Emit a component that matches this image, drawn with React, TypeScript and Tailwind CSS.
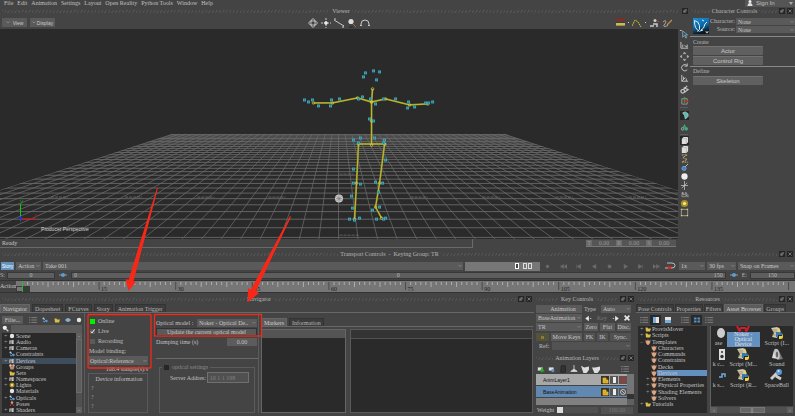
import React from "react";
import { clsx } from "clsx";

const HATCH =
  "bg-[repeating-linear-gradient(120deg,#5a5a5a_0_1px,transparent_1px_3px)]";

function Hatch({ className }: { className?: string }) {
  return <div className={clsx("h-[3px] opacity-70", HATCH, className ?? "flex-1")} />;
}

function DockIcon() {
  return (
    <svg viewBox="0 0 6 6" className="size-[6px]">
      <rect width="6" height="6" fill="#262626" />
      <path d="M2.5 1.5h2v2M1.5 2.5h2v2h-2z" fill="#777" stroke="#777" strokeWidth="0.4" />
    </svg>
  );
}

function CloseIcon() {
  return (
    <svg viewBox="0 0 6 6" className="size-[6px]">
      <rect width="6" height="6" fill="#262626" />
      <path d="M1.5 1.5l3 3M4.5 1.5l-3 3" stroke="#8a8a8a" strokeWidth="0.8" />
    </svg>
  );
}

function TitleBar({ title, close = true, className }: { title: string; close?: boolean; className?: string }) {
  return (
    <div className={clsx("flex h-[10px] shrink-0 items-center gap-[2px] px-[2px]", className)}>
      <Hatch />
      <h2 className="whitespace-pre text-[#b8b8b8]">{title}</h2>
      <Hatch />
      <button aria-label="Undock"><DockIcon /></button>
      {close && <button aria-label="Close"><CloseIcon /></button>}
    </div>
  );
}

function Select({
  label,
  value,
  className,
  dim,
}: {
  label: string;
  value: string;
  className?: string;
  dim?: boolean;
}) {
  return (
    <div className={clsx("relative bg-[#5a5a5a]", className)}>
      <select
        aria-label={label}
        className={clsx(
          "block h-full w-full appearance-none truncate pl-[2px] pr-[5px] outline-none",
          dim ? "text-[#808080]" : "text-[#c8c8c8]",
        )}
      >
        <option>{value}</option>
      </select>
      <svg viewBox="0 0 4 3" className="pointer-events-none absolute right-px top-1/2 h-[3px] w-[4px] -translate-y-1/2">
        <path d="M0.5 0.5l1.5 1.5l1.5-1.5" fill="none" stroke="#8a8a8a" strokeWidth="0.8" />
      </svg>
    </div>
  );
}

function Button({ children, className }: { children: React.ReactNode; className?: string }) {
  return (
    <button className={clsx("flex items-center justify-center whitespace-nowrap bg-[#5a5a5a] text-[#c8c8c8]", className)}>
      {children}
    </button>
  );
}

function Tabs({ items, active, dense }: { items: string[]; active: string; dense?: boolean }) {
  return (
    <div className={clsx("flex h-[9px] items-end overflow-hidden border-b border-[#686868]", dense ? "gap-px" : "gap-[2px]")}>
      {items.map((t) => (
        <button
          key={t}
          className={clsx(
            "h-[8px] shrink-0 whitespace-nowrap border-x border-t",
            dense ? "px-px" : "px-[2px]",
            t === active ? "border-[#666] bg-[#5c5c5c] text-[#d0d0d0]" : "border-[#333] bg-[#3c3c3c] text-[#b8b8b8]",
          )}
        >
          {t}
        </button>
      ))}
    </div>
  );
}

/* ---------- Viewer ---------- */

const VX = 338;
const VY = 51.5;
const rows = Array.from({ length: 30 }, (_, k) => VY + 1 / (0.00638 + 0.000418 * k));
const cols = Array.from({ length: 51 }, (_, k) => (k - 25) * 0.1234);

const bones: number[][] = [
  [313, 74, 332, 74, 357, 69, 371, 73, 385, 70, 409, 76, 427, 75],
  [372, 60, 371, 73, 371, 92, 371, 116],
  [358, 115, 384, 115],
  [358, 115, 356, 154, 354, 190],
  [384, 115, 379, 154, 375, 178, 381, 189],
];
const markers: number[][] = [
  [365, 44], [373, 42], [379, 43], [363, 48], [376, 51],
  [304, 71], [308, 73], [312, 71], [318, 77], [331, 71], [330, 77], [339, 70], [362, 68],
  [358, 70], [370, 70], [375, 75], [383, 70], [395, 70], [408, 73], [407, 79], [414, 78], [425, 74], [432, 73], [428, 74],
  [369, 90], [373, 92], [360, 109], [374, 109], [353, 111], [384, 111],
  [358, 114], [383, 114], [385, 131], [353, 140], [353, 154], [360, 155], [375, 153], [382, 154],
  [378, 163], [351, 167], [352, 179], [379, 178], [372, 181], [349, 190], [354, 191], [359, 189], [376, 190], [383, 190], [385, 189],
];

function Viewport() {
  return (
    <svg viewBox="0 0 677 210" preserveAspectRatio="xMidYMid slice" className="block h-[210px] min-w-0 flex-1 bg-[#2a2a2a]">
      <defs>
        <clipPath id="floor">
          <path d="M173 104.500H503L829 211H-153Z" />
        </clipPath>
      </defs>
      <g clipPath="url(#floor)" stroke="#6a6a6a">
        {rows.map((y) => (
          <line key={y} x1="-160" x2="840" y1={y} y2={y} strokeWidth="0.900" />
        ))}
        {cols.map((s) => (
          <line key={s} x1={VX + s * 53.5} y1="105" x2={VX + s * 160} y2="211.5" strokeOpacity="0.85" strokeWidth="0.900" />
        ))}
      </g>
      <g stroke="#777" strokeWidth="0.700" strokeDasharray="3 1">
        {[51, 125, 197, 268, 410, 482, 555, 628].map((x) => (
          <line key={x} x1={x} x2={x + 17} y1="168" y2="168" />
        ))}
        <line x1="339" x2="353" y1="145" y2="145" />
        <line x1="339" x2="359" y1="206" y2="206" />
      </g>
      <path d="M20.500 192V175" stroke="#18c818" />
      <path d="M21 189.500h14" stroke="#c81414" strokeWidth="1.300" />
      <path d="M19 189l1.500-2l1.500 2l-1.500 3z" fill="#2a2aff" />
      <path d="M20 171l1.500 2m1.500-2l-2 4" stroke="#18a018" strokeWidth="0.700" />
      <path d="M35 185l2 3m0-3l-2 3" stroke="#a01818" strokeWidth="0.700" />
      <text x="41" y="202" fill="#d4d4d4" fontSize="5" className="font-['Liberation_Sans',sans-serif]">Producer Perspective</text>
      <g fill="none" stroke="#8f8c22" strokeWidth="1.800">
        {bones.map((b, i) => (
          <polyline key={i} points={b.join(" ")} />
        ))}
      </g>
      <g fill="none" stroke="#d2cc3a" strokeWidth="0.700">
        {bones.map((b, i) => (
          <polyline key={i} points={b.join(" ")} />
        ))}
        {bones.flatMap((b) =>
          b.flatMap((_, i) => (i % 2 ? [] : [<circle key={`${b[i]}-${b[i + 1]}-${i}`} cx={b[i]} cy={b[i + 1]} r="1.300" />])),
        )}
      </g>
      <g fill="#1d6f80" stroke="#41a9bd" strokeWidth="0.900">
        {markers.map(([x, y]) => (
          <rect key={`${x}-${y}`} x={x - 1} y={y - 1} width="2" height="2" />
        ))}
      </g>
      <circle cx="338.500" cy="169.500" r="4" fill="#c8c8c8" />
      <path d="M335.500 169.500h6M338.500 166.500v6M336 167l5 5m0-5l-5 5" stroke="#777" strokeWidth="0.600" />
    </svg>
  );
}

function Glyph({ children, className }: { children: React.ReactNode; className?: string }) {
  return (
    <svg viewBox="0 0 10 10" fill="none" stroke="#c8c8c8" strokeWidth="1" className={clsx("shrink-0", className ?? "size-[10px]")}>
      {children}
    </svg>
  );
}

function ViewerToolbar() {
  const drop = <svg viewBox="0 0 4 3" className="h-[3px] w-[4px]"><path d="M0.500 0.500l1.500 1.500l1.500-1.500" fill="none" stroke="#999" strokeWidth="0.700" /></svg>;
  const small = "h-[9px] w-[25px] font-['Liberation_Sans',sans-serif] text-[5px]";
  return (
    <div className="grid h-[13px] grid-cols-[1fr_auto_1fr] items-center pl-[2px] pr-[14px]">
      <div className="flex gap-[3px]">
        <Button className={clsx(small, "gap-[3px]")}>{drop}View</Button>
        <Button className={clsx(small, "gap-px")}>{drop}Display</Button>
      </div>
      <div className="flex items-center gap-[3px]">
        <button aria-label="Orbit"><Glyph><ellipse cx="5" cy="5" rx="2" ry="4.500" strokeWidth="0.700" /><ellipse cx="5" cy="5" rx="4.500" ry="2" strokeWidth="0.700" /><circle cx="5" cy="5" r="3.200" strokeWidth="0.500" /></Glyph></button>
        <button aria-label="Pan"><Glyph><path d="M5 0v10M0 5h10" strokeDasharray="2 1" /><circle cx="5" cy="5" r="1.500" fill="#fff" /></Glyph></button>
        <button aria-label="Dolly"><Glyph><path d="M0 2L10 8" /><path d="M0 1l2 0M8 9h2v-2" /></Glyph></button>
        <button aria-label="Zoom"><Glyph><path d="M6 6l3 3" stroke="#b06030" /><path d="M2 9h4" stroke="#222" /><circle cx="4" cy="3.500" r="2.600" fill="#ddd" stroke="none" /></Glyph></button>
        <button aria-label="Roll"><Glyph><path d="M1 8V6a4 4 0 0 1 8 0v2M0 7.500h2M8 7.500h2" /></Glyph></button>
      </div>
      <div className="flex items-center justify-end gap-[3px] pr-[4px]">
        <button aria-label="Ruler"><Glyph className="h-[9px] w-[9px]"><path d="M0 2h10" stroke="#a02020" strokeWidth="2" /><path d="M0 7h10" stroke="#c8bc50" strokeWidth="3" /><path d="M0 5h10" stroke="#333" strokeDasharray="1 1" /></Glyph></button>
        <span className="size-px bg-[#ccc]" />
        <button aria-label="Trajectory"><Glyph><path d="M0 8l3-6l3 2l3 5" stroke="#c8c020" strokeDasharray="2 0.500" /></Glyph></button>
        <span className="size-px bg-[#ccc]" />
        <button aria-label="Model display"><Glyph><circle cx="6" cy="2.500" r="1.500" fill="#ccc" stroke="none" /><path d="M1 8h4M4 6h4v3" strokeWidth="1.500" /><path d="M8 3l2 1" stroke="#c04020" /></Glyph></button>
        <button aria-label="Paint"><Glyph><path d="M1 4c3-3 4 0 1 3c-1 2 2 2 4 0" strokeWidth="0.800" /><path d="M5 7l5-5" stroke="#c89040" strokeWidth="1.200" /></Glyph></button>
      </div>
    </div>
  );
}

const cube = (
  <>
    <path d="M2 3l2-2h5v6l-2 2h-5z" fill="#ddd" stroke="none" />
    <path d="M2 3h5v6M7 3l2-2" stroke="#999" strokeWidth="0.500" />
  </>
);

const stripTop: [string, React.ReactNode][] = [
  ["Select", <><path d="M3 1v7l2-2l1.500 3l1-0.500l-1.500-3h2.500z" fill="#2c5568" stroke="#9cc4d8" strokeWidth="0.700" /><path d="M0 0.500h2" /></>],
  ["Translate axes", <path d="M1 1v7h8M3 4v3M5 5l3 2M8 4v3" />],
  ["Translate", <path d="M5 0l1.500 2h-3zM5 10l1.500-2h-3zM0 5l2-1.500v3zM10 5l-2-1.500v3z" fill="#bbb" stroke="#bbb" strokeWidth="0.500" />],
  ["Rotate", <path d="M8 3a3.500 3.500 0 1 0 0 4.500M8 0.500v3h-3" />],
  ["Scale", <path d="M2 1v7h7M2 8l4-4M4 3v3M7 5v3" />],
  ["Link", <path d="M1 7a2 2 0 1 0 4 0a2 2 0 1 0-4 0M4 5l4-4M4 3l5 2l-4 3" strokeWidth="1.300" />],
  ["Pivot", <><path d="M2 3h6v6h-6z" stroke="#999" /><path d="M5 8V1" stroke="#3aa03a" strokeWidth="1.500" /><path d="M5 6h5" stroke="#d02020" strokeWidth="1.500" /></>],
];
const stripMid: [string, React.ReactNode][] = [
  ["Shaded", <><rect width="10" height="10" fill="#252525" stroke="none" /><path d="M3 2l3-1l3 2v3l-3 3l-1-4z" fill="#5ba" stroke="#cde" strokeWidth="0.700" /></>],
  ["Colored", <><path d="M5 1l2 4h-4z" fill="#38b060" stroke="none" /><circle cx="3" cy="6.500" r="1.500" stroke="#ccc" fill="#357" strokeWidth="0.700" /><circle cx="7" cy="6.500" r="2" fill="#40a880" stroke="none" /></>],
];
const stripBottom: [string, React.ReactNode][] = [
  ["Cube dark", <><rect width="10" height="10" fill="#252525" stroke="none" />{cube}</>],
  ["Cube", cube],
  ["Path", <path d="M2 1h6l-5 3l5 2l-6 3h7" stroke="#c8c070" strokeDasharray="2 1" />],
  ["Joint", <><path d="M5 5l4-4" /><circle cx="4.500" cy="6" r="2.300" fill="#3a80c8" stroke="#9cc8f0" strokeWidth="0.600" /></>],
  ["Sphere", <circle cx="5" cy="5" r="3.500" fill="#eee" stroke="none" />],
  ["Null", <path d="M5 0v10M1 5h8M2 8l6-6" strokeWidth="0.800" />],
  ["Camera", <><path d="M2 5h5v2.500h-5zM7 6l2-1v3z" fill="#555" strokeWidth="0.500" /><circle cx="3" cy="3.500" r="1.300" fill="#999" stroke="none" /><circle cx="6.500" cy="3.500" r="1.300" fill="#888" stroke="none" /></>],
  ["Light", <><circle cx="5" cy="5" r="4" fill="#a89020" stroke="none" /><circle cx="5" cy="5" r="1.800" fill="#f0e8a0" stroke="none" /></>],
  ["Bounds", <><path d="M1.500 1.500h7v7h-7z" strokeWidth="0.700" /><path d="M1 1.500h1.500M7.500 1.500h1.500M1 8.500h1.500M7.500 8.500h1.500" stroke="#e0d840" strokeWidth="1.500" /></>],
];

function ToolStrip() {
  const item = (h: string) => ([name, g]: [string, React.ReactNode]) => (
    <button key={name} aria-label={name} className={clsx("flex items-center justify-center", h)}>
      <Glyph className="size-[9px]">{g}</Glyph>
    </button>
  );
  return (
    <div className="flex w-[12px] shrink-0 flex-col">
      {stripTop.map(item("h-[11px]"))}
      <div className="mx-[2px] my-px h-px bg-[#5a5a5a]" />
      {stripMid.map(item("h-[12px]"))}
      <div className="mx-[2px] my-px h-px bg-[#5a5a5a]" />
      {stripBottom.map(item("h-[9px]"))}
    </div>
  );
}

function StatusRow() {
  return (
    <div className="flex h-[9px] items-center justify-between pr-[14px]">
      <div className="h-[9px] w-7/10 border-b border-r border-[#6a6a6a] pl-[2px] leading-[9px] text-[#c4c4c4]">Ready</div>
      <div className="flex text-[#999]">
        {["T", "R", "S"].map((a) => (
          <label key={a} className="flex h-[7px] border-b border-[#777] bg-[#6a6a6a] leading-[6px]">
            <span className="w-[6px] text-center">{a}</span>
            <input defaultValue="0.00" className="h-[6px] w-[24px] bg-[#555] text-center outline-none" />
          </label>
        ))}
      </div>
    </div>
  );
}

function CharacterControls() {
  const btn = "h-[9px] w-[70px] rounded-[1px] border-t border-[#727272] bg-[#606060] font-['Liberation_Sans',sans-serif]";
  return (
    <aside className="flex w-[105px] shrink-0 flex-col">
      <TitleBar title="Character Controls" />
      <div className="flex h-[21px] gap-px border-b border-[#888] pl-[3px] pt-[2px]">
        <svg viewBox="0 0 16 16" className="size-[16px] shrink-0">
          <defs>
            <linearGradient id="logo" x1="0" y1="0" x2="0.300" y2="1"><stop offset="0" stopColor="#1a90d8" /><stop offset="0.600" stopColor="#0d66a0" /><stop offset="1" stopColor="#0a1520" /></linearGradient>
          </defs>
          <rect width="16" height="16" fill="url(#logo)" />
          <path d="M1.500 2.500q4 0.500 5 5t-2 6M1.500 2.500q-0.500 8 5 11M8 12q3-1 4-6l2-2M9 2l2 1M7 13l3-1" fill="none" stroke="#d8eef8" strokeWidth="1" />
          <path d="M12 13.500h4l-2 2z" fill="#ccc" />
        </svg>
        <div className="flex min-w-0 flex-1 flex-col gap-px">
          {["Character:", "Source:"].map((l) => (
            <div key={l} className="flex h-[7px] gap-px">
              <span className="w-[25px] text-right leading-[7px] text-[#b8b8b8]">{l}</span>
              <Select label={l} value="None" className="flex-1" />
            </div>
          ))}
        </div>
      </div>
      <div className="flex flex-col gap-px border-b border-[#888] pb-px pl-[3px] pt-[2px]">
        <h3 className="leading-[6px] text-[#b8b8b8]">Create</h3>
        <Button className={btn}>Actor</Button>
        <Button className={btn}>Control Rig</Button>
      </div>
      <div className="flex flex-col gap-px pl-[3px] pt-px">
        <h3 className="leading-[7px] text-[#b8b8b8]">Define</h3>
        <Button className={btn}>Skeleton</Button>
      </div>
    </aside>
  );
}

/* ---------- Transport ---------- */

const transport: [string, string][] = [
  ["Record", "M3 5a2 2 0 1 0 4 0a2 2 0 1 0-4 0"],
  ["To start", "M0 2v6M5 2l-4 3l4 3zM10 2l-4 3l4 3z"],
  ["Previous", "M2 2v6M8 2l-5 3l5 3z"],
  ["Play back", "M7 2l-5 3l5 3z"],
  ["Stop", "M3 3h4v4h-4z"],
  ["Play", "M3 2l5 3l-5 3z"],
  ["Next", "M8 2v6M2 2l5 3l-5 3z"],
  ["To end", "M10 2v6M0 2l4 3l-4 3zM5 2l4 3l-4 3z"],
];

function Transport() {
  const range = "border border-[#383838] bg-[#5e5e5e] text-[#b8b8b8] outline-none";
  return (
    <section>
      <TitleBar title="Transport Controls  -  Keying Group: TR" className="mt-px" />
      <div className="mt-[2px] flex h-[10px] items-center gap-[2px] pl-px">
        <Button className="h-[8px] w-[13px] bg-[#6492bf] font-['Liberation_Sans',sans-serif] text-[5px] text-white">Story</Button>
        <Select label="Action" value="Action" className="h-[8px] w-[25px]" />
        <Select label="Take" value="Take 001" className="h-[8px] flex-1" />
        <div className="flex h-[9px] w-[75px] items-center justify-end gap-[4px] bg-[#777]">
          <span className="h-[6px] w-[4px] border border-white bg-[#444]" />
          <span className="mr-[8px] flex h-[6px] w-[9px] gap-px"><span className="flex-1 border border-[#ddd]" /><span className="flex-1 border border-[#ddd]" /></span>
        </div>
        <div className="flex w-[120px] justify-between px-[2px]">
          {transport.map(([n, d]) => (
            <button key={n} aria-label={n}>
              <svg viewBox="0 0 10 10" className="size-[7px]"><path d={d} fill="#6e6e6e" stroke="#6e6e6e" strokeWidth="0.700" /></svg>
            </button>
          ))}
        </div>
        <button aria-label="Loop" className="w-[13px]">
          <svg viewBox="0 0 12 8" className="h-[8px] w-[12px]"><path d="M3 1h5q3 0 3 2.500t-3 2.500h-7" fill="none" stroke="#ccc" strokeWidth="0.900" /><path d="M4 4l3 3M7 4l-3 3" stroke="#d02020" strokeWidth="1.300" /></svg>
        </button>
        <Select label="Speed" value="1x" className="h-[8px] w-[26px]" />
        <Select label="Frame rate" value="30 fps" className="h-[8px] w-[29px]" />
        <Select label="Snap mode" value="Snap on Frames" className="h-[8px] w-[57px]" />
      </div>
      <div className="flex h-[8px] items-center gap-px text-[#b8b8b8]">
        <label className="flex items-center gap-[2px]">S:<input defaultValue="0" className={clsx(range, "h-[7px] w-[48px] text-center")} /></label>
        <span className="flex w-[14px] justify-center"><Key /></span>
        <div className={clsx(range, "flex h-[7px] flex-1 items-center justify-between px-[2px] leading-[5px]")}>
          <span className="w-[9px]">0</span><span>0</span><span>150</span>
        </div>
        <span className="flex w-[14px] justify-center"><Key /></span>
        <label className="flex items-center gap-[3px]">E:<input defaultValue="150" className={clsx(range, "h-[7px] w-[45px] text-center")} /></label>
      </div>
      <div className="mt-px flex h-[13px] border-y border-[#333]">
        <span className="w-[16px] leading-[11px] text-[#c8c8c8]">Action</span>
        <svg viewBox="0 0 779 11" preserveAspectRatio="none" className="h-[11px] min-w-0 flex-1 bg-[#767676]">
          {Array.from({ length: 151 }, (_, n) => {
            const x = 6.5 + 5.107 * n;
            const major = n % 15 === 0;
            return <line key={n} x1={x} x2={x} y1="1" y2={major ? 9 : n % 5 === 0 ? 6 : 4} stroke={major ? "#444" : "#b4b4b4"} strokeWidth="0.900" />;
          })}
          {[15, 30, 45, 60, 75, 90, 105, 120, 135].map((n) => (
            <text key={n} x={8.5 + 5.107 * n} y="10" fontSize="6" fill="#222">{n}</text>
          ))}
          <rect x="0" y="5" width="14" height="6" fill="#3a3a3a" />
          <rect x="1" y="6" width="5" height="4" fill="#777" />
          <line x1="6.500" x2="6.500" y1="0" y2="11" stroke="#28b828" />
        </svg>
      </div>
    </section>
  );
}

function Key() {
  return (
    <svg viewBox="0 0 8 6" className="h-[6px] w-[8px]"><path d="M0 3h8" stroke="#bbb" strokeWidth="0.700" /><circle cx="4" cy="3" r="2" fill="#5a9cd8" /></svg>
  );
}

/* ---------- Navigator ---------- */

type IconKind = "white" | "blue" | "gold" | "folder" | "tool" | "people" | "hand" | "red";

function TreeIcon({ kind }: { kind: IconKind }) {
  return (
    <svg viewBox="0 0 6 6" className="size-[6px] shrink-0">
      {kind === "white" && <circle cx="3" cy="3" r="2.200" fill="#e4e4e4" />}
      {kind === "blue" && <><path d="M1 1l4 4M1 4l2 1" stroke="#6aa0d0" /><circle cx="1.500" cy="1.500" r="1" fill="#a8d0f0" /><circle cx="4.500" cy="4" r="1.200" fill="#5a98d0" /></>}
      {kind === "gold" && <><circle cx="3" cy="3" r="2.500" fill="#a08820" /><circle cx="3" cy="3" r="1.200" fill="#f0e090" /></>}
      {kind === "folder" && <path d="M0.500 1.500h2l0.500 1h3l-1 3h-4z" fill="#d8c048" />}
      {kind === "tool" && <><path d="M1 5V2h2v3M4 1v4" stroke="#ccc" strokeWidth="1.200" /><path d="M0 3h5" stroke="#999" strokeWidth="0.600" /></>}
      {kind === "people" && <><path d="M0.500 2.500h5l-1 3h-3z" fill="#c88860" /><circle cx="1.500" cy="1.500" r="1.200" fill="#e8c8b0" /><circle cx="4.500" cy="1.500" r="1.200" fill="#d8b098" /></>}
      {kind === "hand" && <path d="M0.500 1l1.500 1l1-1.500l1 1.500l1.500-1l-0.500 3l-1.500 2h-1l-1.500-2z" fill="#d8a888" stroke="#a06848" strokeWidth="0.300" />}
      {kind === "red" && <><path d="M1 5l2-3l2 3" stroke="#c83020" fill="none" /><circle cx="3" cy="1.500" r="1.200" fill="#d0a080" /></>}
    </svg>
  );
}

function Tree({ items, selected, highlight, className }: { items: [string, IconKind, number, string][]; selected: string; highlight: string; className?: string }) {
  return (
    <ul className={clsx("flex flex-col justify-between overflow-hidden bg-[#2a2a2a] text-[#c4c4c4]", className)}>
      {items.map(([name, kind, depth, mark]) => (
        <li key={name} className={clsx("flex h-[6px] items-center whitespace-nowrap", depth ? "pl-[8px]" : "pl-[2px]", name === selected && !depth && highlight)}>
          <span className="w-[5px] shrink-0 text-[#9a9a9a]">{mark}</span>
          <TreeIcon kind={kind} />
          <span className={clsx("flex-1 pl-px leading-[6px]", name === selected && highlight)}>{name}</span>
        </li>
      ))}
    </ul>
  );
}

const navTree: [string, IconKind, number, string][] = [
  ["Scene", "white", 0, "+"],
  ["Audio", "tool", 0, "+"],
  ["Cameras", "tool", 0, "+"],
  ["Constraints", "blue", 0, ""],
  ["Devices", "tool", 0, "+"],
  ["Groups", "people", 0, ""],
  ["Sets", "folder", 0, ""],
  ["Namespaces", "tool", 0, "+"],
  ["Lights", "gold", 0, "+"],
  ["Materials", "white", 0, ""],
  ["Opticals", "blue", 0, "+"],
  ["Poses", "red", 0, ""],
  ["Shaders", "tool", 0, "+"],
];

function ListIcon() {
  return <Glyph className="size-[8px]"><path d="M0 2h2M3 2h7M0 5h2M3 5h7M0 8h2M3 8h7" stroke="#8c8c8c" /></Glyph>;
}

function NavigatorTree() {
  return (
    <div className="flex w-[85px] shrink-0 flex-col border-r border-[#5c5c5c] pl-[2px] pr-[2px] pt-[2px]">
      <div className="flex h-[9px] items-center gap-[4px]">
        <Button className="h-[8px] w-[21px]">Filte...</Button>
        <span className="flex flex-1 items-center justify-between pl-[2px]">
          <ListIcon />
          <TreeIcon kind="blue" />
          <TreeIcon kind="folder" />
          <svg viewBox="0 0 6 6" className="size-[6px]"><path d="M0 3h6" stroke="#aaa" /><circle cx="3" cy="3" r="2" fill="#80b4e0" /></svg>
          <TreeIcon kind="white" />
        </span>
      </div>
      <label className="flex h-[9px] items-center gap-[2px]">
        <Glyph className="size-[7px]"><circle cx="4" cy="4" r="3" fill="#eee" stroke="none" /><path d="M6 6l3 3" strokeWidth="2" /></Glyph>
        <input aria-label="Search" className="h-[8px] min-w-0 flex-1 bg-[#5a5a5a] outline-none" />
      </label>
      <div className="flex h-[80px]">
        <Tree items={navTree} selected="Devices" highlight="bg-[#3f4c5c]" className="flex-1" />
        <div className="flex w-[6px] flex-col bg-[#505050]">
          <div className="h-[6px] bg-[#606060] text-center text-[#aaa]">-</div>
          <div className="h-[54px] border border-[#6a6a6a] bg-[#5c5c5c]" />
          <div className="mt-auto h-[6px] bg-[#606060] text-center text-[#aaa]">-</div>
        </div>
      </div>
    </div>
  );
}

function DeviceStatus() {
  return (
    <div className="flex w-[66px] shrink-0 flex-col pl-[5px] pr-px pt-[3px] text-[#c0c0c0]">
      <div className="flex h-[10px] items-center gap-[3px]"><span className="size-[5px] bg-[#00f000]" />Online</div>
      {[["Live", true], ["Recording", false]].map(([l, on]) => (
        <label key={l as string} className="flex h-[10px] items-center gap-[3px]">
          <input type="checkbox" defaultChecked={on as boolean} className="sr-only" />
          <svg viewBox="0 0 5 5" className="size-[5px] bg-[#5a5a5a]">{on ? <path d="M1 2.500l1 1.500l2.500-3.500" fill="none" stroke="#eee" /> : null}</svg>
          {l}
        </label>
      ))}
      <span className="-ml-px h-[10px] leading-[10px]">Model binding:</span>
      <Select label="Model binding" value="Optical:Reference" className="-ml-[2px] h-[9px] w-[60px]" />
      <span className="h-[8px] pr-[2px] text-right leading-[9px]">108.4 sample(s)/s</span>
      <div className="-ml-[2px] mr-[2px] flex h-[40px] flex-col border border-[#5a5a5a] pl-[2px]">
        <span className="h-[10px] text-center leading-[10px]">Device information</span>
        {[0, 1, 2].map((n) => <span key={n} className="h-[9px] leading-[9px] text-[#999]">?</span>)}
      </div>
    </div>
  );
}

function OpticalSettings() {
  return (
    <div className="flex w-[108px] shrink-0 flex-col border-r border-[#5c5c5c] pl-[5px] text-[#c0c0c0]">
      <div className="flex h-[46px] flex-col gap-px border-b border-[#6a6a6a] pr-px pt-[6px]">
        <div className="flex h-[8px] items-center justify-between whitespace-nowrap">
          <span>Optical model :</span>
          <Select label="Optical model" value="Noker - Optical De.." className="h-[8px] w-[60px]" />
        </div>
        <Button className="h-[8px] border border-[#333]">Update the current optical model</Button>
        <label className="flex h-[9px] items-center justify-between">Damping time (s)<input defaultValue="0.00" className="h-[8px] w-[30px] bg-[#5c5c5c] text-center outline-none" /></label>
      </div>
      <fieldset className="mx-[3px] mt-[5px] h-[49px] border border-[#5c5c5c] pl-[10px] pt-px">
        <legend className="-ml-[8px] px-[2px] leading-[7px] text-[#8c8c8c]">
          <label className="flex items-center gap-[3px]"><input type="checkbox" className="size-[5px] appearance-none bg-[#262626]" />optical settings</label>
        </legend>
        <label className="flex items-center gap-px whitespace-nowrap">Server Addres:<input defaultValue="10 1 1 198" className="h-[11px] w-[42px] border border-[#707070] bg-[#505050] px-[2px] text-[#808080] outline-none" /></label>
      </fieldset>
    </div>
  );
}

function MarkersPanel() {
  return (
    <div className="flex min-w-0 flex-1 flex-col pl-[2px] pr-px pt-[5px]">
      <Tabs items={["Markers", "Information"]} active="Markers" />
      <div className="mt-[2px] flex h-[84px] gap-[4px]">
        <div className="flex-5 border border-[#666] bg-[#2a2a2a]"><div className="h-[8px] bg-[#545454]" /></div>
        <div className="flex-11 border border-[#5a5a5a] bg-[#2a2a2a]"><div className="h-[9px] border-b border-[#505050] bg-[#343434]" /></div>
      </div>
    </div>
  );
}

function Navigator() {
  return (
    <section className="flex min-w-0 flex-1 flex-col">
      <TitleBar title="Navigator" />
      <Tabs items={["Navigator", "Dopesheet", "FCurves", "Story", "Animation Trigger"]} active="Navigator" />
      <div className="flex">
        <NavigatorTree />
        <DeviceStatus />
        <OpticalSettings />
        <MarkersPanel />
      </div>
    </section>
  );
}

/* ---------- Key controls and layers ---------- */

function Lock() {
  return <svg viewBox="0 0 8 8" className="size-[8px]"><rect width="8" height="8" fill="#3a3420" /><path d="M2 4h5v3h-5zM2 4V2h3v2" fill="#d8a820" stroke="#e8c040" strokeWidth="0.700" /></svg>;
}

function KeyControls() {
  const row = "flex h-[8px] items-stretch gap-[2px]";
  const wide = "w-[46px] shrink-0";
  return (
    <section className="flex w-[102px] shrink-0 flex-col gap-px">
      <TitleBar title="Key Controls" className="-mb-px" />
      <div className="flex flex-col gap-px pl-[2px] pr-[5px] pt-px text-[#c0c0c0]">
        <div className={row}>
          <Button className={clsx(wide, "pl-[8px]")}>Animation</Button>
          <span className="w-[15px] leading-[8px]">Type</span>
          <Select label="Type" value="Auto" className="flex-1" />
        </div>
        <div className={row}>
          <Select label="Layer" value="BaseAnimation" className={wide} />
          <div className="flex flex-1 items-center justify-between pr-px">
            <button aria-label="Previous key"><Glyph className="h-[7px] w-[9px]"><path d="M5 2v6L1 5zM7 5h2" fill="#eee" stroke="#eee" /></Glyph></button>
            <span className="text-[#777]">Key</span>
            <button aria-label="Next key"><Glyph className="h-[7px] w-[9px]"><path d="M5 2v6L9 5zM1 5h2" fill="#eee" stroke="#eee" /></Glyph></button>
            <button aria-label="Delete key"><Glyph className="size-[6px]"><path d="M1 1l8 8M9 1L1 9" stroke="#eee" strokeWidth="2.500" /></Glyph></button>
          </div>
        </div>
        <div className={row}>
          <Select label="Keying group" value="TR" className={wide} />
          <Button className="flex-1">Zero</Button><Button className="flex-1">Flat</Button><Button className="flex-1">Disc.</Button>
        </div>
        <div className="flex h-[9px] items-stretch gap-[2px] pt-px">
          <Button className="w-[13px] bg-[#55523c]"><span className="size-[3px] bg-[#8a7c30]" /></Button>
          <Button className="w-[31px]">Move Keys</Button>
          <Button className="flex-1 bg-[#525252] text-[#7c7c7c]">FK</Button>
          <Button className="flex-1 bg-[#525252] text-[#7c7c7c]">IK</Button>
          <Button className="w-[21px] bg-[#525252] text-[#7c7c7c]">Sync.</Button>
        </div>
        <div className={row}>
          <span className="w-[14px] pl-[3px] leading-[8px]">Ref:</span>
          <Select label="Reference" value="" className="flex-1 bg-[#525252]" dim />
        </div>
      </div>
      <TitleBar title="Animation Layers" className="mt-[2px]" />
      <div className="flex h-[9px] items-center gap-[3px] px-[3px]">
        <Glyph className="size-[8px]"><path d="M1 3h6v4h-6z" fill="#ddd" stroke="none" /><path d="M6 4v5M4 7h5" stroke="#20b020" strokeWidth="2" /></Glyph>
        <Glyph className="size-[8px]"><path d="M1 3h6v4h-6z" fill="#ddd" stroke="none" /><circle cx="6" cy="7" r="2" fill="#5a98d0" stroke="none" /></Glyph>
        <Glyph className="size-[8px]"><path d="M3 1h5v8h-6z" fill="#333" stroke="#222" /></Glyph>
        <Glyph className="size-[8px]"><path d="M5 0v5l4 3h-8l4-3" fill="#ddd" stroke="#ddd" /></Glyph>
        <Glyph className="size-[8px]"><path d="M0 1l4 2l6-1v4l-3 4h-4z" fill="#ddd" stroke="none" /></Glyph>
        <Glyph className="size-[8px]"><path d="M0 3l4 0l6-1v4l-3 4h-4z" fill="#ddd" stroke="none" /></Glyph>
        <span className="ml-auto pr-[4px]"><ListIcon /></span>
      </div>
      <div className="mx-[2px] flex h-[31px] bg-[#808080]">
        <ul className="flex-1 font-['Liberation_Sans',sans-serif] text-[#111]">
          {[["AnimLayer1", "bg-[#a8a8a8]"], ["BaseAnimation", "bg-[#6088b0]"]].map(([n, bg], i) => (
            <li key={n} className={clsx("flex h-[12px] items-center gap-px border-b border-[#444] pl-[7px] text-[5px]", bg)}>
              <span className="flex-1">{n}</span>
              <Lock />
              <svg viewBox="0 0 8 8" className="size-[8px]"><rect width="8" height="8" fill="#555" /><path d="M3 1h3v6h-3z" fill="#eee" /></svg>
              <svg viewBox="0 0 8 8" className="size-[8px]"><rect width="8" height="8" fill="#555" /><path d="M1.500 4a2.500 2.500 0 1 0 5 0a2.500 2.500 0 1 0-5 0M2 2l4 4" fill="none" stroke={i ? "#bbb" : "#c03030"} /></svg>
            </li>
          ))}
        </ul>
        <div className="flex w-[7px] flex-col bg-[#606060]"><div className="h-[20px] bg-[#757575]" /><div className="h-[5px] bg-[#333]" /></div>
      </div>
      <label className="flex h-[8px] items-center gap-[3px] px-[3px] text-[#c0c0c0]">
        Weight
        <input type="range" defaultValue="0" className="h-[6px] w-[41px] appearance-none bg-[#505050] [&::-webkit-slider-thumb]:size-[6px] [&::-webkit-slider-thumb]:appearance-none [&::-webkit-slider-thumb]:bg-[#ddd]" />
        <input aria-label="Weight value" defaultValue="100.00" className="h-[7px] min-w-0 flex-1 bg-[#525252] text-center text-[#777] outline-none" />
      </label>
    </section>
  );
}

/* ---------- Resources ---------- */

const assetTree: [string, IconKind, number, string][] = [
  ["ProvisMover", "folder", 0, "+"],
  ["Scripts", "folder", 0, "+"],
  ["Templates", "hand", 0, "−"],
  ["Characters", "hand", 1, ""],
  ["Commands", "hand", 1, ""],
  ["Constraints", "hand", 1, ""],
  ["Decks", "hand", 1, ""],
  ["Devices", "hand", 1, ""],
  ["Elements", "hand", 1, "+"],
  ["Physical Properties", "hand", 1, "+"],
  ["Shading Elements", "hand", 1, "+"],
  ["Solvers", "hand", 1, ""],
  ["Tutorials", "folder", 0, "+"],
];

function AssetIcon({ kind }: { kind: string }) {
  return (
    <svg viewBox="0 0 14 14" className="size-[14px] shrink-0">
      {kind === "py" && <><path d="M1 2l6-1l3 2l-3 9l-5-1l2-4z" fill="#ccc8b8" /><path d="M2 4h5M3 6h4M2 9h4" stroke="#a08838" strokeWidth="0.700" /><path d="M6 6h4q2 0 2 2v1h-4v2h-2z" fill="#3878b0" /><path d="M13 7v4q0 2-2 2h-2v-3h3z" fill="#f0d040" /><path d="M8 2l2 4" stroke="#e8d070" strokeWidth="2" /></>}
      {kind === "sound" && <><path d="M4 2h4l5 10l-6 1z" fill="#777" /><path d="M4 3l4 9l-6-1z" fill="#ddd" /><ellipse cx="7" cy="7" rx="2.500" ry="5.500" fill="#c4c4c4" transform="rotate(-15 7 7)" /><ellipse cx="7" cy="7.500" rx="1.200" ry="3" fill="#666" /></>}
      {kind === "ball" && <><path d="M1 11l6-6M6 8l5 3" stroke="#ccc" strokeWidth="3" /><circle cx="9" cy="4" r="3" fill="#5a98d8" /><circle cx="8.500" cy="3" r="1" fill="#cfe6fa" /></>}
      {kind === "mouse" && <ellipse cx="9" cy="7" rx="4" ry="5" fill="#ccc" />}
      {kind === "box" && <><rect x="7" y="2" width="6" height="11" fill="#ddd" /><circle cx="10" cy="5" r="1" fill="#333" /><circle cx="10" cy="9.500" r="1.700" fill="#333" /></>}
      {kind === "link" && <path d="M7 9h3v-3h3v3" stroke="#70a8d8" strokeWidth="1.500" fill="none" />}
    </svg>
  );
}

const assets: [string, string][] = [
  ["mouse", "ase"], ["noker", ""], ["py", "Script (I..."],
  ["box", "k c..."], ["py", "Script (M..."], ["sound", "Sound"],
  ["link", "k s..."], ["py", "Script (R..."], ["ball", "SpaceBall"],
];

function Resources() {
  const box = "flex h-[10px] w-[11px] items-center justify-center";
  return (
    <section className="flex w-[159px] shrink-0 flex-col">
      <TitleBar title="Resources" />
      <Tabs dense items={["Pose Controls", "Properties", "Filters", "Asset Browser", "Groups"]} active="Asset Browser" />
      <div className="flex h-[13px] items-center gap-px pl-[2px]">
        <span className={box}><ListIcon /></span>
        <span className={clsx(box, "bg-[#2a2a2a]")}><svg viewBox="0 0 6 6" className="size-[6px]"><rect width="3" height="6" fill="#7ab0dc" /><rect x="3" width="3" height="6" fill="#e4e4e4" /></svg></span>
        <span className={box}><svg viewBox="0 0 6 6" className="size-[6px]"><rect width="6" height="3" fill="#e4e4e4" /><rect y="3" width="6" height="3" fill="#7ab0dc" /></svg></span>
        <span className={clsx(box, "ml-[5px]")}><ListIcon /></span>
        <span className={clsx(box, "bg-[#2a2a2a]")}><svg viewBox="0 0 6 6" className="size-[6px]"><path d="M0 1.500h2.500M3.500 1.500h2.500M0 4.500h2.500M3.500 4.500h2.500" stroke="#5a90c0" strokeWidth="2" /></svg></span>
        <span className={box}><ListIcon /></span>
      </div>
      <div className="flex gap-[3px] px-[2px]">
        <div className="h-[87px] w-[69px] bg-[#2a2a2a]">
          <Tree items={assetTree} selected="Devices" highlight="bg-[#6490c0]" className="h-[81px]" />
        </div>
        <div className="flex min-w-0 flex-1 flex-col border-l border-[#606060]">
          <div className="grid h-[80px] grid-cols-[15px_1fr_1fr] content-start gap-x-px overflow-hidden bg-[#2a2a2a] text-[#c0c0c0]">
            {assets.map(([kind, label], i) =>
              kind === "noker" ? (
                <button key={i} className="flex flex-col items-center">
                  <svg viewBox="0 0 14 6" className="h-[6px] w-[14px]"><path d="M1 0l2 4l2-2h4l2 2l2-4M3 5l2-1M11 5l-2-1" fill="none" stroke="#d01c28" strokeWidth="2" /></svg>
                  <span className="w-full bg-[#6490c0] text-center leading-[5px] text-[#e0e0e0]">Noker -<br />Optical<br />Device</span>
                </button>
              ) : (
                <button key={i} className="flex h-[21px] flex-col items-center whitespace-nowrap">
                  <AssetIcon kind={kind} />
                  <span className="leading-[6px]">{label}</span>
                </button>
              ),
            )}
          </div>
          <div className="mt-px flex h-[6px] items-center justify-between bg-[#505050] leading-[6px]">
            <span className="w-[6px] bg-[#606060] text-center text-[#aaa]">‹</span>
            <span className="h-[6px] w-[25px] border border-[#777] bg-[#666] text-center leading-[4px] text-[#ccc]">||</span>
            <span className="w-[6px] bg-[#606060] text-center text-[#aaa]">›</span>
          </div>
        </div>
      </div>
    </section>
  );
}

/* Callout frames and arrows drawn over the panels. */
function Callouts() {
  return (
    <svg viewBox="0 0 795 416" className="pointer-events-none absolute left-0 top-0 h-[416px] w-[795px]">
      <g fill="none" stroke="#f82818" strokeWidth="1.300">
        <rect x="88" y="314.500" width="63" height="53.500" rx="1" />
        <rect x="154.500" y="314.500" width="107" height="21.500" />
      </g>
      <g fill="#f82818">
        <path d="M157 188h1L133.500 281l2.500 1L128.500 291L125.500 279l3 1Z" />
        <path d="M290 216l1 1L256 291l3 2L247.500 302.500L248 288l3 1.500Z" />
      </g>
    </svg>
  );
}

export default function App() {
  return (
    <div className="relative w-full overflow-hidden bg-[#444444] pb-[2px] font-['Liberation_Serif',serif] text-[6px] leading-[6px] text-[#c0c0c0]">
      <header className="flex h-[6px] items-center justify-between">
        <nav className="flex gap-[4px] pl-[4px]">
          {["File", "Edit", "Animation", "Settings", "Layout", "Open Reality", "Python Tools", "Window", "Help"].map((m) => (
            <a key={m} href="#" className="leading-[5px]">{m}</a>
          ))}
        </nav>
        <button className="flex h-[7px] w-[50px] items-center gap-[3px] bg-[#555] px-[2px] font-['Liberation_Sans',sans-serif]">
          <svg viewBox="0 0 6 6" className="size-[6px]"><circle cx="3" cy="1.500" r="1.500" fill="#eee" /><path d="M0.500 6q0-3 2.500-3t2.500 3z" fill="#ddd" /></svg>
          Sign In
          <svg viewBox="0 0 4 3" className="ml-auto h-[3px] w-[4px]"><path d="M0 0h4l-2 3z" fill="#aaa" /></svg>
        </button>
      </header>
      <main>
        <div className="flex">
          <section className="flex min-w-0 flex-1 flex-col">
            <TitleBar title="Viewer" close={false} />
            <ViewerToolbar />
            <div className="flex">
              <Viewport />
              <ToolStrip />
            </div>
            <StatusRow />
          </section>
          <CharacterControls />
        </div>
        <Transport />
        <div className="flex pt-px">
          <Navigator />
          <KeyControls />
          <Resources />
        </div>
      </main>
      <Callouts />
    </div>
  );
}
